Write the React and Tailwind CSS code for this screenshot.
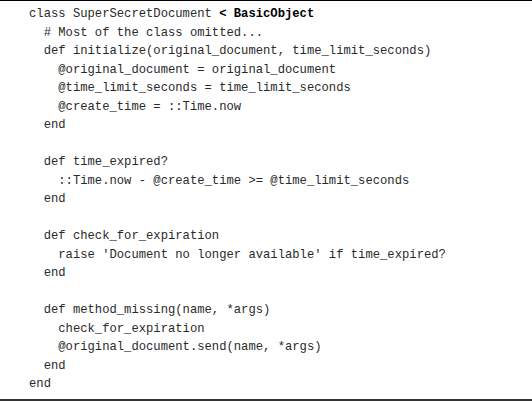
const LINES = [
  'class SuperSecretDocument ',
  '  # Most of the class omitted...',
  '  def initialize(original_document, time_limit_seconds)',
  '    @original_document = original_document',
  '    @time_limit_seconds = time_limit_seconds',
  '    @create_time = ::Time.now',
  '  end',
  '',
  '  def time_expired?',
  '    ::Time.now - @create_time >= @time_limit_seconds',
  '  end',
  '',
  '  def check_for_expiration',
  "    raise 'Document no longer available' if time_expired?",
  '  end',
  '',
  '  def method_missing(name, *args)',
  '    check_for_expiration',
  '    @original_document.send(name, *args)',
  '  end',
  'end',
];

export default function App() {
  return (
    <div className="w-[532px] h-[401px] bg-white flex flex-col">
      <div className="border-t border-black" />
      <pre
        className="flex-1 pt-[4px] pl-[29px] text-[12.2px] leading-[18.5px] text-[#2a2a2a]"
        style={{ fontFamily: '"Liberation Mono", monospace' }}
      >
        {LINES.map((line, i) => (
          <div key={i} className="h-[18.5px] whitespace-pre">
            {line}
            {i === 0 && <b className="text-black">&lt; BasicObject</b>}
          </div>
        ))}
      </pre>
      <div className="border-t-2 border-[#333]" />
    </div>
  );
}
